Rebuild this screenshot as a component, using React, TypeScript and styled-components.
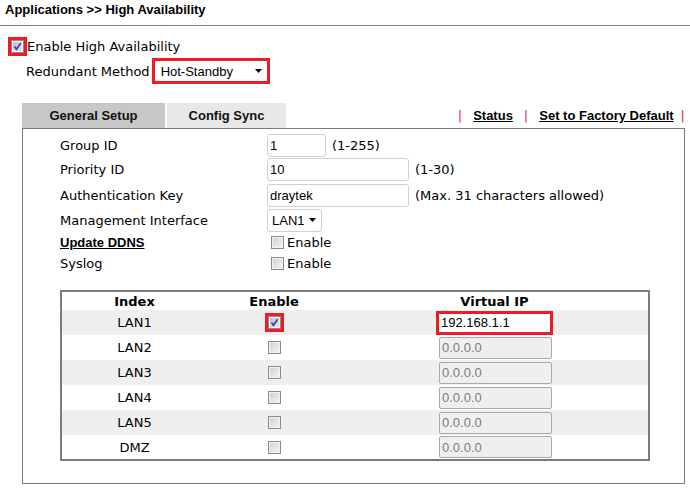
import React from "react";
import styled, { createGlobalStyle } from "styled-components";

const GlobalStyle = createGlobalStyle`
  html, body { margin: 0; padding: 0; background: #fff; }
  body { font-family: "DejaVu Sans", Verdana, sans-serif; font-size: 13px; color: #000; }
  * { box-sizing: border-box; }
`;

const RED = "#ed1c24";

const Page = styled.div`
  width: 690px;
  height: 488px;
  overflow: hidden;
`;

const TitleBar = styled.div`
  height: 26px;
  padding: 2px 0 0 5px;
  border-bottom: 1px solid #808080;
  font: bold 13px "Liberation Sans", Arial, sans-serif;
  line-height: 16px;
`;

const Section = styled.div`
  padding-left: 8px;
`;

const EnableRow = styled.div`
  display: flex;
  align-items: center;
  height: 19px;
  margin-top: 11px;
`;

const MethodRow = styled.div`
  display: flex;
  align-items: center;
  gap: 2px;
  height: 26px;
  margin-top: 2px;
  padding-left: 18px;
`;

const Label = styled.span`
  font-family: "DejaVu Sans", Verdana, sans-serif;
  font-size: 13px;
  white-space: nowrap;
`;

const Highlight = styled.span`
  display: inline-flex;
  border: 3px solid ${RED};
  line-height: 0;
`;

const Box = styled.span<{ $checked?: boolean }>`
  display: inline-flex;
  align-items: center;
  justify-content: center;
  width: 13px;
  height: 13px;
  border: 1px solid #8a8b8b;
  box-shadow: inset 0 0 0 1px #f2f2f2;
  background: ${(p) =>
    p.$checked
      ? "linear-gradient(135deg, #b9bdd0 0%, #e6e8f2 100%)"
      : "linear-gradient(135deg, #cfcfcf 0%, #f6f6f6 100%)"};
  flex: none;
`;

const Check = ({ checked }: { checked?: boolean }) => (
  <Box $checked={checked}>
    {checked && (
      <svg width="11" height="11" viewBox="0 0 11 11">
        <path d="M2.5 5.5 L4.5 8.2 L8.6 2.2" fill="none" stroke="#38478f" strokeWidth="1.7" />
      </svg>
    )}
  </Box>
);

const SelectBox = styled.div<{ $w: number; $hl?: boolean }>`
  width: ${(p) => p.$w}px;
  height: ${(p) => (p.$hl ? 26 : 23)}px;
  display: flex;
  align-items: center;
  justify-content: space-between;
  padding: 0 5px 0 ${(p) => (p.$hl ? 6 : 4)}px;
  border: ${(p) => (p.$hl ? `3px solid ${RED}` : "1px solid #cdd0d4")};
  border-radius: ${(p) => (p.$hl ? 0 : 3)}px;
  background: #fff;
  font: 13px "Liberation Sans", Arial, sans-serif;
  flex: none;
`;

const Arrow = () => (
  <svg width="7" height="4" viewBox="0 0 7 4">
    <polygon points="0,0 7,0 3.5,4" fill="#000" />
  </svg>
);

const TabArea = styled.div`
  margin: 19px 0 0 22px;
  width: 663px;
`;

const TabBar = styled.div`
  display: flex;
  height: 25px;
  gap: 2px;
`;

const Tab = styled.div<{ $active?: boolean; $w: number }>`
  width: ${(p) => p.$w}px;
  display: flex;
  align-items: center;
  justify-content: center;
  background: ${(p) => (p.$active ? "#c7c7c7" : "#e8e8e8")};
  font: bold 13px "Liberation Sans", Arial, sans-serif;
  color: #111;
`;

const Links = styled.div`
  margin-left: auto;
  display: flex;
  align-items: center;
  padding-right: 0;
  font: bold 13px "Liberation Sans", Arial, sans-serif;
`;

const Pipe = styled.span<{ $l: number; $r: number }>`
  color: #e2175a;
  font: 13px "DejaVu Sans", Verdana, sans-serif;
  margin: 0 ${(p) => p.$r}px 0 ${(p) => p.$l}px;
`;

const LinkText = styled.a`
  color: #000;
  text-decoration: underline;
  cursor: pointer;
`;

const Panel = styled.div`
  height: 356px;
  border: 1px solid #7a7a7a;
  padding: 4px 0 0 37px;
`;

const FormRow = styled.div<{ $h: number }>`
  display: flex;
  align-items: center;
  height: ${(p) => p.$h}px;
`;

const FieldLabel = styled.div<{ $bold?: boolean }>`
  width: 207px;
  flex: none;
  font: ${(p) => (p.$bold ? 'bold 13px "Liberation Sans", Arial, sans-serif' : '13px "DejaVu Sans", Verdana, sans-serif')};
  text-decoration: ${(p) => (p.$bold ? "underline" : "none")};
`;

const Value = styled.div`
  display: flex;
  align-items: center;
  gap: 6px;
`;

const TextInput = styled.div<{ $w: number }>`
  width: ${(p) => p.$w}px;
  height: 23px;
  border: 1px solid #cdd0d4;
  border-radius: 3px;
  padding-left: 2px;
  display: flex;
  align-items: center;
  font: 13px "Liberation Sans", Arial, sans-serif;
  background: #fff;
`;

const CheckLabel = styled.div`
  display: flex;
  align-items: center;
  gap: 3px;
  padding-left: 4px;
`;

const Table = styled.table`
  margin-top: 16px;
  width: 590px;
  border: 2px solid #7c7c7c;
  border-collapse: collapse;
  table-layout: fixed;
`;

const Th = styled.th<{ $w?: number }>`
  height: 19px;
  padding: 0;
  font: bold 13px "DejaVu Sans", Verdana, sans-serif;
  text-align: center;
  width: ${(p) => (p.$w ? `${p.$w}px` : "auto")};
`;

const Tr = styled.tr<{ $shade?: boolean }>`
  background: ${(p) => (p.$shade ? "#efefef" : "#fff")};
`;

const Td = styled.td`
  height: 25px;
  padding: 0;
  text-align: center;
  vertical-align: middle;
  font: 13px "DejaVu Sans", Verdana, sans-serif;
`;

const Cell = styled.div`
  display: flex;
  justify-content: center;
  align-items: center;
`;

const IpBox = styled.div<{ $hl?: boolean }>`
  width: ${(p) => (p.$hl ? 117 : 113)}px;
  height: ${(p) => (p.$hl ? 24 : 22)}px;
  border: ${(p) => (p.$hl ? `3px solid ${RED}` : "1px solid #a9a9a9")};
  border-radius: ${(p) => (p.$hl ? 0 : 2)}px;
  background: ${(p) => (p.$hl ? "#fff" : "#efefef")};
  color: ${(p) => (p.$hl ? "#000" : "#7d7d7d")};
  padding-left: 2px;
  display: flex;
  align-items: center;
  text-align: left;
  font: 13px "Liberation Sans", Arial, sans-serif;
  margin-left: ${(p) => (p.$hl ? 0 : 2)}px;
`;

const lans = ["LAN1", "LAN2", "LAN3", "LAN4", "LAN5", "DMZ"];

export default function App() {
  return (
    <Page>
      <GlobalStyle />
      <TitleBar>Applications &gt;&gt; High Availability</TitleBar>
      <Section>
        <EnableRow>
          <Highlight>
            <Check checked />
          </Highlight>
          <Label>Enable High Availability</Label>
        </EnableRow>
        <MethodRow>
          <Label>Redundant Method</Label>
          <SelectBox $w={118} $hl>
            <span>Hot-Standby</span>
            <Arrow />
          </SelectBox>
        </MethodRow>
      </Section>
      <TabArea>
        <TabBar>
          <Tab $active $w={143}>General Setup</Tab>
          <Tab $w={119}>Config Sync</Tab>
          <Links>
            <Pipe $l={0} $r={11}>|</Pipe>
            <LinkText>Status</LinkText>
            <Pipe $l={11} $r={11}>|</Pipe>
            <LinkText>Set to Factory Default</LinkText>
            <Pipe $l={7} $r={0}>|</Pipe>
          </Links>
        </TabBar>
        <Panel>
          <FormRow $h={24}>
            <FieldLabel>Group ID</FieldLabel>
            <Value>
              <TextInput $w={59}>1</TextInput>
              <Label>(1-255)</Label>
            </Value>
          </FormRow>
          <FormRow $h={25}>
            <FieldLabel>Priority ID</FieldLabel>
            <Value>
              <TextInput $w={142}>10</TextInput>
              <Label>(1-30)</Label>
            </Value>
          </FormRow>
          <FormRow $h={26}>
            <FieldLabel>Authentication Key</FieldLabel>
            <Value>
              <TextInput $w={142}>draytek</TextInput>
              <Label>(Max. 31 characters allowed)</Label>
            </Value>
          </FormRow>
          <FormRow $h={24}>
            <FieldLabel>Management Interface</FieldLabel>
            <SelectBox $w={55}>
              <span>LAN1</span>
              <Arrow />
            </SelectBox>
          </FormRow>
          <FormRow $h={21}>
            <FieldLabel $bold>Update DDNS</FieldLabel>
            <CheckLabel>
              <Check />
              <Label>Enable</Label>
            </CheckLabel>
          </FormRow>
          <FormRow $h={21}>
            <FieldLabel>Syslog</FieldLabel>
            <CheckLabel>
              <Check />
              <Label>Enable</Label>
            </CheckLabel>
          </FormRow>
          <Table>
            <thead>
              <tr>
                <Th $w={146}>Index</Th>
                <Th $w={134}>Enable</Th>
                <Th>Virtual IP</Th>
              </tr>
            </thead>
            <tbody>
              {lans.map((name, i) => (
                <Tr key={name} $shade={i % 2 === 0}>
                  <Td>{name}</Td>
                  <Td>
                    <Cell>
                      {i === 0 ? (
                        <Highlight>
                          <Check checked />
                        </Highlight>
                      ) : (
                        <Check />
                      )}
                    </Cell>
                  </Td>
                  <Td>
                    <Cell>
                      <IpBox $hl={i === 0}>{i === 0 ? "192.168.1.1" : "0.0.0.0"}</IpBox>
                    </Cell>
                  </Td>
                </Tr>
              ))}
            </tbody>
          </Table>
        </Panel>
      </TabArea>
    </Page>
  );
}
